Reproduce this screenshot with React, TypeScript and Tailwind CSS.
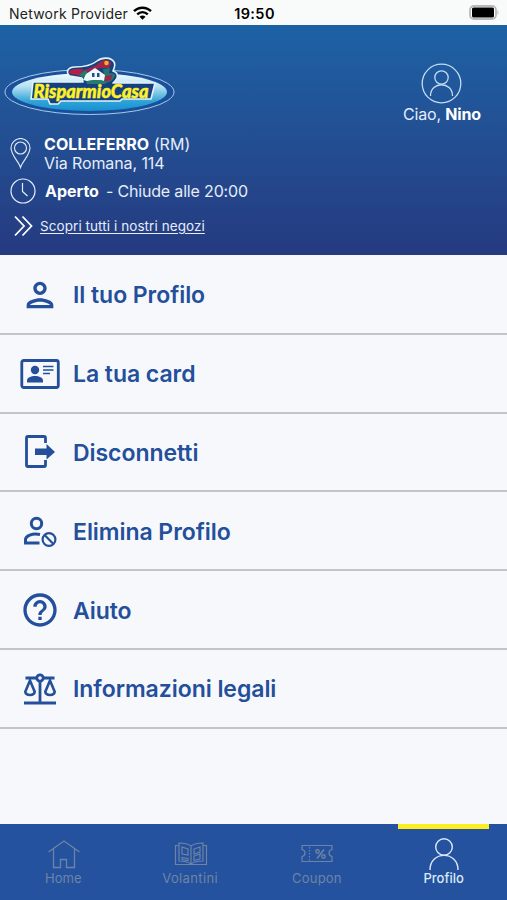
import type { ReactNode } from "react"
import { MdHelpOutline, MdOutlinePerson } from "react-icons/md"

function Logo() {
    return (
    <svg width="172" height="62" viewBox="0 0 172 62">
        <defs>
            <linearGradient id="oval" x1="0" y1="0" x2="0" y2="1">
                <stop offset="0" stopColor="#f2fbfe"/>
                <stop offset="0.35" stopColor="#b9e2f3"/>
                <stop offset="0.75" stopColor="#2ea3d8"/>
                <stop offset="1" stopColor="#1690cf"/>
            </linearGradient>
        </defs>
        <ellipse cx="85.500" cy="36" rx="84.500" ry="22.500" fill="#1a4f9c" stroke="#a9cbe8" strokeWidth="1"/>
        <ellipse cx="85.500" cy="36" rx="77.500" ry="19" fill="url(#oval)"/>
        <path d="M29 26 H79 L78 22 L66 20 C61 16 64 11 71 11 C82 11 88 9 93 5 C98 1 107 1 110 6 C112 9 110 12 109 15 C115 17 114 22 111 25 L109 27 H151 L147 43 H118 L116 45 H57 L54 48 H46 L44 43 H27 Z" fill="#17407e" stroke="#e2f2fa" strokeWidth="1.600" strokeLinejoin="round"/>
        <path d="M65 17 C66 12 72 13 79 13 L77 20 L68 18 Z" fill="#b51f43"/>
        <path d="M74 19 C79 12 90 13 96 6 C101 2 106 4 107 8 L105 12 L96 12 L86 15 Z" fill="#a42347"/>
        <path d="M75 19 L81 14 L84 17 L79 22 Z" fill="#237a6a"/>
        <path d="M99 13 L106 12 L105 17 L111 18 C111 23 106 27 101 27 L100 19 Z" fill="#24776e"/>
        <path d="M101 20 L108 19 L107 24 L101 26 Z" fill="#a42347"/>
        <circle cx="102.500" cy="7" r="2.300" fill="#ecb22f"/>
        <path d="M79 24 L82 18 L91 12 L101 19 L100 25 C95 23 89 26 83 25 Z" fill="#eff9fd"/>
        <path d="M88 17h2.500v4h-2.500zM93 17h2.500v4h-2.500z" fill="#2b4a89"/>
        <path d="M82 25.500 C89 23 96 24 103 25.500 L101 28 L83 28 Z" fill="#247b70"/>
        <text x="29.500" y="41.500" fontSize="19.500" textLength="115" lengthAdjust="spacingAndGlyphs" fill="#fff127" stroke="#fff127" strokeWidth="0.500" className="font-['Lato',sans-serif] font-black italic">RisparmioCasa</text>
    </svg>
    )
}

function CardIcon() {
    return (
    <svg width="40" height="40" viewBox="0 0 40 40" fill="currentColor">
        <rect x="1.800" y="6.500" width="36.500" height="27" rx="2" fill="none" stroke="currentColor" strokeWidth="2.800"/>
        <circle cx="15" cy="16" r="4.200"/>
        <path d="M7 28.500v-2c0-2.800 4-4.500 8-4.500s8 1.700 8 4.500v2z"/>
        <path d="M23 12.500h10.500M23 16h10.500M23 19.500h7" fill="none" stroke="currentColor" strokeWidth="1.500"/>
    </svg>
    )
}

function LogoutIcon() {
    return (
    <svg width="40" height="40" viewBox="0 0 40 40">
        <path d="M25.500 11V6q0-1.500-1.500-1.500H8Q6.500 4.500 6.500 6V33q0 1.500 1.500 1.500h16q1.500 0 1.500-1.500v-5" fill="none" stroke="currentColor" strokeWidth="2.800"/>
        <path d="M15 16.500h11.500V12l8.500 8-8.500 7.500V23H15z" fill="currentColor"/>
    </svg>
    )
}

function DeleteIcon() {
    return (
    <svg width="40" height="40" viewBox="0 0 40 40" fill="none" stroke="currentColor" strokeWidth="3">
        <circle cx="16.500" cy="12.500" r="5.200"/>
        <path d="M20 23.500c-8-1.600-14.500 1.500-14.500 5v3.500h14"/>
        <circle cx="29" cy="28.500" r="6.400" strokeWidth="2.200"/>
        <path d="M24.800 24.300l8.400 8.400" strokeWidth="2.200"/>
    </svg>
    )
}

function LegalIcon() {
    return (
    <svg width="40" height="40" viewBox="0 0 40 40" fill="none" stroke="currentColor" strokeWidth="2.800">
        <circle cx="20" cy="9" r="3.200"/>
        <path d="M5.500 9h11M23.500 9h11M20 12.500v21M4 34h32"/>
        <path d="M10 11.500L5.300 22.700c.3 4.300 9.100 4.300 9.400 0zM30 11.500l-4.700 11.200c.3 4.300 9.100 4.300 9.400 0z" strokeWidth="2.600"/>
    </svg>
    )
}

const menu: { label: string; icon: ReactNode }[] = [
    { label: "Il tuo Profilo", icon: <MdOutlinePerson size={40}/> },
    { label: "La tua card", icon: <CardIcon/> },
    { label: "Disconnetti", icon: <LogoutIcon/> },
    { label: "Elimina Profilo", icon: <DeleteIcon/> },
    { label: "Aiuto", icon: <MdHelpOutline size={40}/> },
    { label: "Informazioni legali", icon: <LegalIcon/> },
]

function StatusBar() {
    return (
    <div className="flex h-[25px] items-center justify-between bg-[#f9fbfb] pl-[9px] pr-[7px] text-black">
        <span className="flex flex-1 items-center gap-[5px] whitespace-nowrap pt-[3px] text-[14px] leading-5 tracking-[0.22px] text-[#222]">
            Network Provider
            <svg className="-mt-[2px]" width="19" height="14" viewBox="0 0 19 14" fill="none" stroke="#000" strokeWidth="2.400">
                <path d="M1 5.200C5.800.5 13.200.5 18 5.200M4.200 8.400c3.200-3 7.400-3 10.600 0"/>
                <path d="M6.500 10.700c1.900-1.600 4.100-1.600 6 0l-3 3z" fill="#000" stroke="none"/>
            </svg>
        </span>
        <span className="pt-[3px] text-center text-[14.500px] font-semibold leading-5 tracking-[0.4px]">19:50</span>
        <div className="flex flex-1 justify-end">
            <svg width="31" height="15" viewBox="0 0 31 15">
                <rect x="1" y="1" width="26" height="13" rx="4" fill="#fff" stroke="#b9b9b9" strokeWidth="1.800"/>
                <rect x="3" y="2.500" width="22" height="10" rx="1.500"/>
                <path d="M28.500 5q2 2.500 0 5z" fill="#b9b9b9"/>
            </svg>
        </div>
    </div>
    )
}

function Header() {
    return (
    <header className="flex h-[230px] justify-between bg-linear-to-b from-[#1c62a5] to-[#253a80] text-[#e4edf9]">
        <div className="flex flex-col pl-1 pt-[31px]">
            <Logo/>
            <div className="mt-[17px] flex gap-[13px] pl-[6px]">
                <svg className="mt-[3px]" width="21" height="31" viewBox="0 0 21 31" fill="none" stroke="currentColor" strokeWidth="1.100">
                    <path d="M10.500 29.500C9 24 1 17 1 10a9.500 9.500 0 0 1 19 0c0 7-8 14-9.500 19.500z"/>
                    <circle cx="10.500" cy="10" r="6"/>
                </svg>
                <div className="text-[16px] leading-[19px]">
                    <p className="tracking-[0.07px]"><b className="font-bold text-white">COLLEFERRO</b> (RM)</p>
                    <p className="tracking-[-0.1px]">Via Romana, 114</p>
                </div>
            </div>
            <div className="mt-[5px] flex h-[26px] items-center pl-[6px] text-[16px]">
                <svg width="26" height="26" viewBox="0 0 26 26" fill="none" stroke="currentColor" strokeWidth="1.200">
                    <circle cx="13" cy="13" r="12"/>
                    <path d="M12.500 5v8.500l5 4.500"/>
                </svg>
                <b className="ml-[9px] font-bold text-white">Aperto</b>
                <span className="ml-[7px] tracking-[-0.17px]">- Chiude alle 20:00</span>
            </div>
            <div className="mt-[11px] flex items-center gap-[7px] pl-[10px] text-[13.500px] tracking-[0.07px]">
                <svg width="19" height="22" viewBox="0 0 19 22" fill="none" stroke="#fff" strokeWidth="1.800">
                    <path d="M1 1.500l9 9.500-9 9.500M8.500 1.500l9 9.500-9 9.500"/>
                </svg>
                <a className="underline underline-offset-2">Scopri tutti i nostri negozi</a>
            </div>
        </div>
        <div className="flex flex-col items-center pr-[26px] pt-[38px]">
            <svg width="41" height="41" viewBox="0 0 41 41" fill="none" stroke="#c4dcf4" strokeWidth="1.300">
                <circle cx="20.500" cy="20.500" r="19.300"/>
                <circle cx="20.500" cy="14.500" r="6.700"/>
                <path d="M9.500 33c0-15 22-15 22 0"/>
            </svg>
            <p className="text-[16px] leading-5 tracking-[-0.15px]">Ciao, <b className="font-bold text-white">Nino</b></p>
        </div>
    </header>
    )
}

function BottomNav() {
    return (
    <nav className="grid h-[76px] grid-cols-4 bg-[#24529f] text-[13px] text-[#6f84a3]">
        <div className="flex flex-col items-center pt-[15px]">
            <svg className="translate-x-px" width="34" height="30" viewBox="0 0 34 30" fill="none" stroke="currentColor" strokeWidth="1.300">
                <path d="M1.500 13L17 2l15.500 11M6.500 9.500V28.500h7V20.500h6v8h8V9.500"/>
            </svg>
            <span className="-mt-px leading-5 tracking-[0.1px]">Home</span>
        </div>
        <div className="flex flex-col items-center pt-[15px]">
            <svg className="translate-x-px" width="34" height="30" viewBox="0 0 34 30" fill="none" stroke="currentColor" strokeWidth="1.200">
                <path d="M17 7C13 4 9 4 5 4v18c4 0 8 0 12 3 4-3 8-3 12-3V4c-4 0-8 0-12 3zM17 7v18"/>
                <path d="M5 6.500H1.500V25.500H32.500V6.500H29"/>
                <path d="M8 8l6 2v6l-6-1zM8 18.500l6 1v2l-6-1zM20 10l6-2v5l-6 2zM20 17l6-2v5l-6 1.500z"/>
            </svg>
            <span className="-mt-px leading-5 tracking-[0.35px]">Volantini</span>
        </div>
        <div className="flex flex-col items-center pt-[15px]">
            <svg width="34" height="30" viewBox="0 0 34 30" fill="none" stroke="currentColor" strokeWidth="1.200">
                <path d="M2 6.500h30v4c-4 1-4 6 0 7v5H2v-5c4-1 4-6 0-7z"/>
                <path d="M9.500 8v14" strokeDasharray="1.500 1.500"/>
                <path d="M24 10.500l-7 9" strokeWidth="1.600"/>
                <circle cx="17.500" cy="12.500" r="1.700" strokeWidth="1.400"/>
                <circle cx="23.500" cy="17.500" r="1.700" strokeWidth="1.400"/>
            </svg>
            <span className="-mt-px leading-5 tracking-[0.2px]">Coupon</span>
        </div>
        <div className="flex flex-col items-center text-[#dce9f8]">
            <div className="h-[5px] w-[91px] bg-[#fcee21]"/>
            <svg className="mt-[8px]" width="34" height="34" viewBox="0 0 34 34" fill="none" stroke="currentColor" strokeWidth="1.400">
                <circle cx="17" cy="10" r="8.300"/>
                <path d="M3 33c0-19.500 28-19.500 28 0"/>
            </svg>
            <span className="-mt-[3px] font-medium leading-5">Profilo</span>
        </div>
    </nav>
    )
}

function App() {
    return (
    <div className="flex h-[900px] w-[507px] flex-col overflow-hidden bg-[#f7f8fb] font-['Inter',sans-serif]">
        <StatusBar/>
        <Header/>
        <main className="flex-1 pt-px">
            {menu.map((item)=>(
                <div key={item.label} className="flex h-[78.800px] items-center gap-[13px] border-b-2 border-[#c3c4c6] pl-5 pt-px text-[#234f9b]">
                    {item.icon}
                    <span className="pt-px text-[23px] font-semibold leading-7 tracking-[-0.05px]">{item.label}</span>
                </div>
            ))}
        </main>
        <BottomNav/>
    </div>
    )
}

export default App
